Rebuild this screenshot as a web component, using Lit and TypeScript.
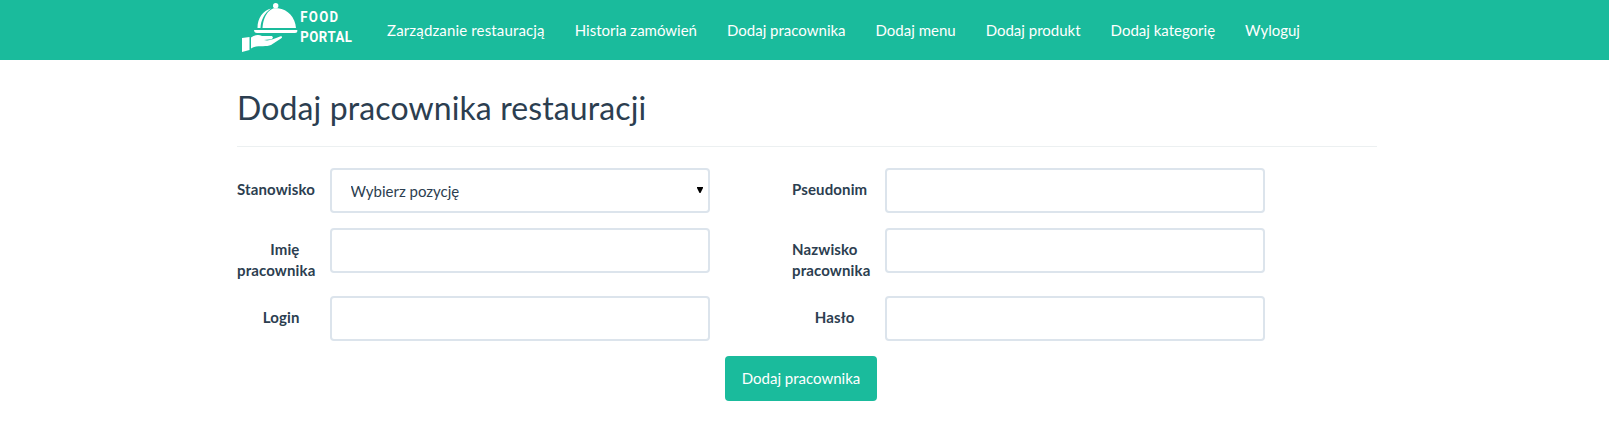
import { LitElement, html, css } from "lit";
import { customElement } from "lit/decorators.js";
import { classMap } from "lit/directives/class-map.js";

interface Field {
  label: string;
  name: string;
  type: "text" | "password" | "select";
}

const NAV = [
  "Zarządzanie restauracją",
  "Historia zamówień",
  "Dodaj pracownika",
  "Dodaj menu",
  "Dodaj produkt",
  "Dodaj kategorię",
  "Wyloguj",
];

const FIELDS: Field[] = [
  { label: "Stanowisko", name: "position", type: "select" },
  { label: "Pseudonim", name: "nick", type: "text" },
  { label: "Imię pracownika", name: "first", type: "text" },
  { label: "Nazwisko pracownika", name: "last", type: "text" },
  { label: "Login", name: "login", type: "text" },
  { label: "Hasło", name: "password", type: "password" },
];

@customElement("app-root")
export class AppRoot extends LitElement {
  static styles = css`
    :host {
      display: block;
      min-height: 439px;
      background: #fff;
      color: #2c3e50;
      font-family: Lato, "Liberation Sans", sans-serif;
      font-size: 15px;
      line-height: 21px;
    }
    .bar {
      display: flex;
      height: 60px;
      padding-left: 237px;
      background: #1abb9c;
    }
    .logo {
      display: block;
      width: 120px;
      height: 60px;
    }
    .word {
      font-family: Roboto, sans-serif;
      font-weight: 700;
      font-size: 15.5px;
      fill: #fff;
    }
    .nav {
      display: flex;
      margin: 0;
      padding: 0 0 0 15px;
      list-style: none;
    }
    .link {
      display: block;
      padding: 20px 15px 19px;
      color: #fff;
      text-decoration: none;
      white-space: nowrap;
    }
    .link.first {
      letter-spacing: 0.15px;
    }
    .page {
      width: 1140px;
      margin-left: 237px;
      padding-top: 27px;
    }
    .title {
      margin: 0;
      padding-bottom: 18px;
      border-bottom: 1px solid #ecf0f1;
      font-size: 32px;
      font-weight: 400;
      letter-spacing: 0.12px;
      line-height: 41px;
      height: 41px;
    }
    .form {
      display: grid;
      grid-template-columns: 62.5px 380px 115px 380px;
      column-gap: 30px;
      row-gap: 15px;
      margin-top: 21px;
      align-items: start;
    }
    .label {
      padding-top: 11px;
      text-align: right;
      font-weight: 700;
      letter-spacing: 0.13px;
    }
    .label.second {
      margin-left: 52.5px;
    }
    .control {
      box-sizing: border-box;
      display: block;
      width: 380px;
      height: 45px;
      margin: 0;
      padding: 10px 15px;
      border: 2px solid #dce4ec;
      border-radius: 4px;
      background: #fff;
      color: #2c3e50;
      font: inherit;
      outline: none;
      appearance: none;
    }
    .select {
      padding: 11px 19px 9px;
    }
    .wrap {
      position: relative;
    }
    .arrow {
      position: absolute;
      right: 7px;
      top: 19px;
      pointer-events: none;
    }
    .submit {
      display: block;
      width: 152px;
      height: 45px;
      margin: 15px 0 0 488px;
      padding: 0;
      border: 0;
      border-radius: 4px;
      background: #1abb9c;
      color: #fff;
      font: inherit;
    }
  `;

  private logo() {
    return html`<svg class="logo" viewBox="237 0 120 60" role="img" aria-label="Food Portal">
      <g fill="#fff">
        <circle cx="275.700" cy="5.700" r="2.700" />
        <path d="M262.500 28C263 18 267 11 273.500 8.200H278C288 9.500 295 17 296 28Z" />
        <path d="M257.500 28C257.500 18 263 10.500 271 8.500C264 13.500 261 20 260.500 28Z" />
        <path d="M254 30H297.300V31.500Q297 33 294.500 33H257Q254 33 254 30Z" />
        <path d="M242 38L249.500 37V50L242 52Z" />
        <path d="M251 37.500C255 34.500 259 34.500 262 36H271C273.500 36 273.500 38.800 271 39.300L264 40C269 41.500 273 39 280 36.500C282 35.500 283 37 281 38.500L271 45C266 47.500 257 44.500 251 48.500Z" />
      </g>
      <g transform="scale(.85 1)">
        <text class="word" x="353.300" y="22.500" textLength="44.500">FOOD</text>
        <text class="word" x="353.300" y="41.700" textLength="60.700">PORTAL</text>
      </g>
    </svg>`;
  }

  private field(f: Field, i: number) {
    return html`
      <label class=${classMap({ label: true, second: i % 2 === 1 })} for=${f.name}>${f.label}</label>
      ${f.type === "select"
        ? html`<div class="wrap">
            <select class="control select" id=${f.name}>
              <option>Wybierz pozycję</option>
            </select>
            <svg class="arrow" width="6" height="6" viewBox="0 0 6 6"><path d="M0 0H6V1L3.500 6H2.500L0 1Z" /></svg>
          </div>`
        : html`<input class="control" id=${f.name} type=${f.type} />`}
    `;
  }

  render() {
    return html`
      <header class="bar">
        ${this.logo()}
        <ul class="nav">
          ${NAV.map((n, i) => html`<li><a class=${classMap({ link: true, first: i === 0 })} href="#">${n}</a></li>`)}
        </ul>
      </header>
      <main class="page">
        <h2 class="title">Dodaj pracownika restauracji</h2>
        <form class="form">
          ${FIELDS.map((f, i) => this.field(f, i))}
        </form>
        <button class="submit" type="button">Dodaj pracownika</button>
      </main>
    `;
  }
}
